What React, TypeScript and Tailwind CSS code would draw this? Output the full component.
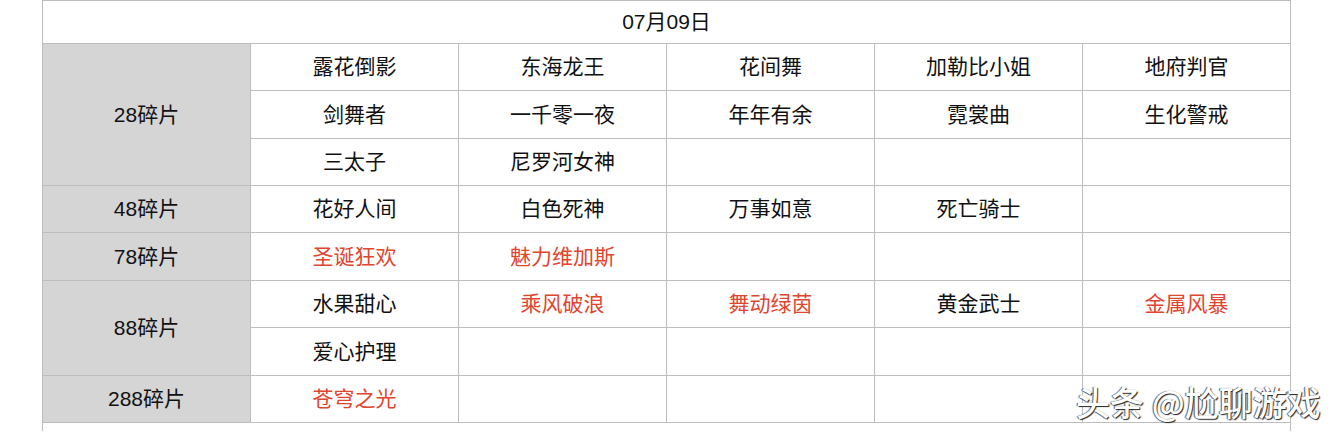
import React from "react";

type Cell = { t: string; red?: boolean };

const rows: { label?: string; span?: number; cells: Cell[] }[] = [
  { label: "28碎片", span: 3, cells: [{ t: "露花倒影" }, { t: "东海龙王" }, { t: "花间舞" }, { t: "加勒比小姐" }, { t: "地府判官" }] },
  { cells: [{ t: "剑舞者" }, { t: "一千零一夜" }, { t: "年年有余" }, { t: "霓裳曲" }, { t: "生化警戒" }] },
  { cells: [{ t: "三太子" }, { t: "尼罗河女神" }, { t: "" }, { t: "" }, { t: "" }] },
  { label: "48碎片", span: 1, cells: [{ t: "花好人间" }, { t: "白色死神" }, { t: "万事如意" }, { t: "死亡骑士" }, { t: "" }] },
  { label: "78碎片", span: 1, cells: [{ t: "圣诞狂欢", red: true }, { t: "魅力维加斯", red: true }, { t: "" }, { t: "" }, { t: "" }] },
  { label: "88碎片", span: 2, cells: [{ t: "水果甜心" }, { t: "乘风破浪", red: true }, { t: "舞动绿茵", red: true }, { t: "黄金武士" }, { t: "金属风暴", red: true }] },
  { cells: [{ t: "爱心护理" }, { t: "" }, { t: "" }, { t: "" }, { t: "" }] },
  { label: "288碎片", span: 1, cells: [{ t: "苍穹之光", red: true }, { t: "" }, { t: "" }, { t: "" }, { t: "" }] },
];

const rowSpanCls: Record<number, string> = {
  1: "row-span-1",
  2: "row-span-2",
  3: "row-span-3",
};

export default function App() {
  return (
    <div
      className="relative w-[1334px] h-[435px] bg-white overflow-hidden"
      style={{ fontFamily: '"Liberation Sans", "Noto Sans CJK SC", sans-serif' }}
    >
      <div className="ml-[42px] w-[1249px]">
        <div className="grid grid-cols-[repeat(6,208px)] grid-rows-[43px_47px_48px_47px_47px_48px_47px_48px_47px] border-l border-t border-[#bdbdbd] text-[21px] text-[#111]">
          <div className="col-span-6 flex items-center justify-center border-r border-b border-[#bdbdbd]">
            07月09日
          </div>
          {rows.map((r, i) => (
            <React.Fragment key={i}>
              {r.label && (
                <div
                  className={`${rowSpanCls[r.span || 1]} flex items-center justify-center bg-[#d5d5d5] border-r border-b border-[#bdbdbd]`}
                >
                  {r.label}
                </div>
              )}
              {r.cells.map((c, j) => (
                <div
                  key={j}
                  className={`flex items-center justify-center border-r border-b border-[#bdbdbd] ${c.red ? "text-[#e0452f]" : ""}`}
                >
                  {c.t}
                </div>
              ))}
            </React.Fragment>
          ))}
        </div>
        <div className="h-[8px] border-l border-r border-[#bdbdbd]" />
      </div>
      <div
        className="absolute left-[1076px] top-[385px] text-[34px] leading-none text-white whitespace-nowrap"
        style={{
          fontFamily: '"Noto Sans CJK SC", sans-serif',
          textShadow: "1px 1px 1px #222, -1px 0 1px #555",
          fontWeight: 500,
        }}
      >
        头条 @尬聊游戏
      </div>
    </div>
  );
}
